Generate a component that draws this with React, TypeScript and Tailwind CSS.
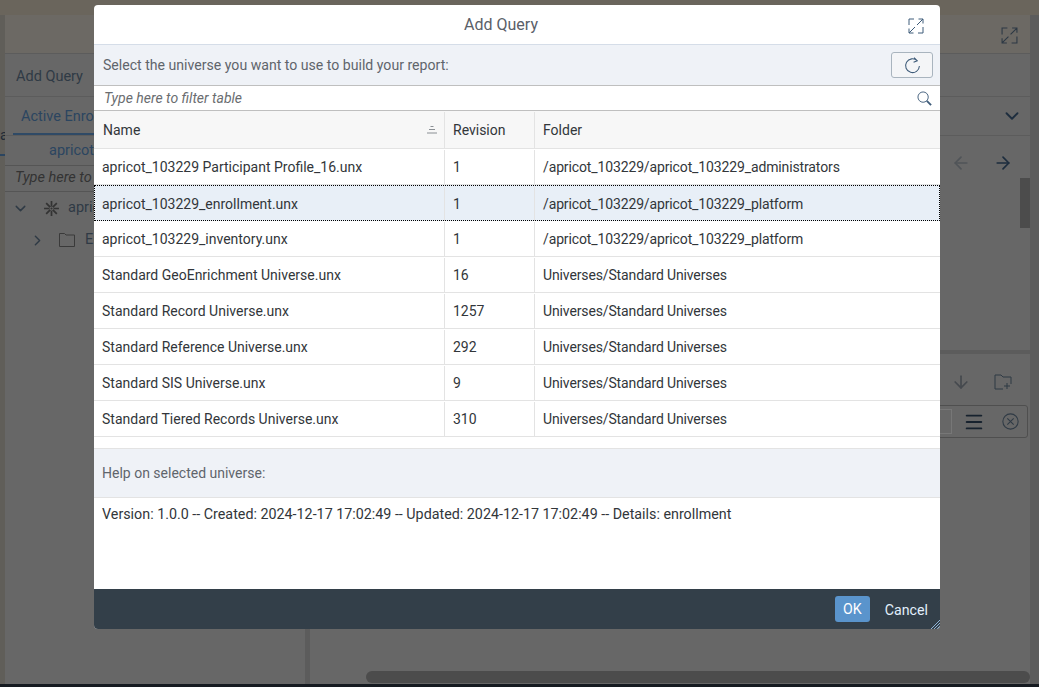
import { ArrowLeft, ArrowRight, ArrowDown, ChevronDown, ChevronRight, Menu } from "lucide-react";

const rows = [
  ["apricot_103229 Participant Profile_16.unx", "1", "/apricot_103229/apricot_103229_administrators"],
  ["apricot_103229_enrollment.unx", "1", "/apricot_103229/apricot_103229_platform"],
  ["apricot_103229_inventory.unx", "1", "/apricot_103229/apricot_103229_platform"],
  ["Standard GeoEnrichment Universe.unx", "16", "Universes/Standard Universes"],
  ["Standard Record Universe.unx", "1257", "Universes/Standard Universes"],
  ["Standard Reference Universe.unx", "292", "Universes/Standard Universes"],
  ["Standard SIS Universe.unx", "9", "Universes/Standard Universes"],
  ["Standard Tiered Records Universe.unx", "310", "Universes/Standard Universes"],
];

function ExpandIcon({ className }: { className: string }) {
  return (
    <svg viewBox="0 0 16 16" fill="none" stroke="currentColor" strokeWidth="1" className={className}>
      <path d="M1 7V1h5M15 9v6h-5M9 7l6-6M10.5 1H15v4.5M7 9l-6 6M1 10.5V15h4.5" />
    </svg>
  );
}

function StarIcon() {
  return (
    <svg viewBox="0 0 16 16" stroke="#333333" fill="#333333" className="ml-[14px] h-[17px] w-[17px]">
      <path strokeWidth="1.6" d="M8 1v14M1 8h14M3 3l10 10M13 3L3 13" />
      <circle cx="8" cy="8" r="1.5" stroke="#676767" strokeWidth="1" />
    </svg>
  );
}

function Background() {
  return (
    <div className="flex h-[687px] flex-col bg-[#5d5d5d] text-[14.5px] text-[#2f3a45]">
      <div className="h-[15px] bg-[#6a655c]"></div>
      <div className="flex flex-1">
        <div className="w-[5px] overflow-hidden bg-[#605e59] pt-[111px] leading-5 text-[#1f2a36]">
          <div>a</div>
          <div className="mt-[8px] h-[2px] bg-[#2b4560]"></div>
        </div>
        <div className="flex w-[1025px] flex-col rounded-t bg-[#676767]">
          <div className="flex h-[39px] items-center justify-end border-b border-[#5c5c5c] bg-[#6c6964] pr-[12px] pt-[3px]">
            <ExpandIcon className="h-[17px] w-[17px] text-[#2c3844]" />
          </div>
          <div className="flex h-[43px] items-center border-b border-[#5c5c5c] pl-[11px] pt-[3px]">Add Query</div>
          <div className="flex h-[39px] items-stretch justify-between border-b border-[#5c5c5c] pl-[8px] pr-[7px] text-[#2b4560]">
            <span className="flex w-[200px] items-center border-b-2 border-[#2f4a66] pl-[8px] pt-[3px]">Active Enrollment</span>
            <ChevronDown size={22} className="self-center text-[#1d2d3e]" />
          </div>
          <div className="flex flex-1">
            <div className="flex w-[305px] flex-col border-r-[5px] border-[#5c5c5c]">
              <div className="pl-[44px] pt-[4px] text-[#2b4560]">apricot_103229</div>
              <div className="mt-[3px] flex h-[27px] items-center border-y border-[#555555] pl-[10px] italic text-[#333333]">Type here to filter</div>
              <div className="flex h-[33px] items-center pl-[7px]">
                <ChevronDown size={17} />
                <StarIcon />
                <span className="ml-[8px]">apricot</span>
              </div>
              <div className="flex h-[31px] items-center pl-[24px]">
                <ChevronRight size={17} />
                <svg viewBox="0 0 16 14" fill="none" stroke="#3a3a3a" strokeWidth="1" className="ml-[13px] h-[14px] w-[16px]">
                  <path d="M0.5 13.5V0.5h5l1.5 1.5h8.5v11.5z" />
                </svg>
                <span className="ml-[10px]">Enrollment</span>
              </div>
            </div>
            <div className="flex flex-1 flex-col">
              <div className="flex h-[218px] justify-end border-b-[4px] border-[#5c5c5c]">
                <div className="flex items-start gap-[22px] pr-[7px] pt-[17px]">
                  <ArrowLeft size={20} className="text-[#505458]" />
                  <ArrowRight size={20} className="text-[#1d2d3e]" />
                </div>
                <div className="mr-[-2px] mt-[42px] h-[50px] w-[12px] bg-[#4c4c4c]"></div>
              </div>
              <div className="flex items-center justify-end gap-[23px] pr-[18px] pt-[18px]">
                <ArrowDown size={20} className="text-[#45494e]" />
                <svg viewBox="0 0 18 16" fill="none" stroke="currentColor" strokeWidth="1" className="h-[16px] w-[18px]">
                  <path d="M9 15H1V1h6l2 2h8v7M13 9v6M10 12h6" />
                </svg>
              </div>
              <div className="ml-auto mr-[2px] mt-[13px] flex h-[33px] w-[200px] items-center justify-end rounded-[3px] border border-[#4f4f4f] pr-[8px]">
                <div className="mr-[11px] h-[25px] w-[40px] border border-[#777777]"></div>
                <Menu size={22} className="text-[#17222e]" />
                <svg viewBox="0 0 16 16" fill="none" stroke="currentColor" strokeWidth="1" className="ml-[17px] h-[17px] w-[17px]">
                  <circle cx="8" cy="8" r="7.2" />
                  <path d="M5 5l6 6M11 5l-6 6" />
                </svg>
              </div>
              <div className="flex-1"></div>
              <div className="mb-[1px] ml-auto h-[12px] w-[664px] rounded-md bg-[#4c4c4c]"></div>
            </div>
          </div>
        </div>
        <div className="w-[9px] bg-[#5c5c5c]"></div>
      </div>
      <div className="h-[3px] bg-[#151a20]"></div>
    </div>
  );
}

export default function App() {
  return (
    <div className="relative h-[687px] w-[1039px] overflow-hidden font-['Roboto',sans-serif]">
      <Background />
      <div className="absolute left-[94px] top-[5px] flex h-[624px] w-[846px] flex-col overflow-hidden rounded-[4px] bg-white text-[14px] text-[#32363a]">
        <div className="relative flex h-[40px] shrink-0 items-center justify-center border-b border-[#d5dde8] pr-[32px] pt-[1px] text-[16px] text-[#5a6068]">
          Add Query
          <ExpandIcon className="absolute right-[16px] top-[13px] h-[16px] w-[16px] text-[#3f5c7a]" />
        </div>
        <div className="flex h-[40px] shrink-0 items-center justify-between bg-[#eff2f7] pl-[9px] pr-[7px] text-[14.1px] text-[#5f656c]">
          <span className="pt-[2px]">Select the universe you want to use to build your report:</span>
          <button className="flex h-[26px] w-[42px] items-center justify-center rounded-[3px] border border-[#a9b4be] bg-[#f4f5f7]">
            <svg viewBox="0 0 16 16" fill="none" stroke="#3f5c7a" strokeWidth="1" className="h-[17px] w-[17px]">
              <path d="M12.5 3.5A6.5 6.5 0 1 0 14.5 8.5M9.5 0.5l3 3-3.5 1.5" />
            </svg>
          </button>
        </div>
        <div className="flex h-[26px] shrink-0 items-center justify-between border-y border-[#bfbfbf] pl-[10px] pr-[8px] italic text-[#6a6d70]">
          <span>Type here to filter table</span>
          <svg viewBox="0 0 16 16" fill="none" stroke="#3f5c7a" className="h-[15px] w-[15px]">
            <circle cx="6.5" cy="6.5" r="5.5" strokeWidth="1" />
            <path d="M10.5 10.5l4.5 4.5" strokeWidth="2" />
          </svg>
        </div>
        <div className="flex h-[38px] shrink-0 border-b border-[#e3e3e3] bg-[#f7f7f7] pt-[1px] text-[#32363a]">
          <div className="flex w-[351px] items-center justify-between border-r border-[#e3e3e3] pl-[9px] pr-[6px]">
            <span>Name</span>
            <svg viewBox="0 0 12 10" className="h-[10px] w-[12px] text-[#8a8f94]" fill="none" stroke="currentColor" strokeWidth="1">
              <path d="M4.5 1.5h3M3 4.5h6M1 8h10" />
            </svg>
          </div>
          <div className="flex w-[90px] items-center border-r border-[#e3e3e3] pl-[8px]">Revision</div>
          <div className="flex flex-1 items-center pl-[8px]">Folder</div>
        </div>
        {rows.map((row, index) => (
          <div
            key={row[0]}
            className={
              index === 1
                ? "flex h-[36px] shrink-0 bg-[#e8eff7] pt-[2px] outline-1 -outline-offset-1 outline-dotted outline-black"
                : "flex h-[36px] shrink-0 border-b border-[#e3e3e3] pt-[1px]"
            }
          >
            <div className="flex w-[351px] items-center border-r border-[#e3e3e3] pl-[8px]">{row[0]}</div>
            <div className="flex w-[90px] items-center border-r border-[#e3e3e3] pl-[8px]">{row[1]}</div>
            <div className="flex flex-1 items-center pl-[8px] tracking-[-0.13px]">{row[2]}</div>
          </div>
        ))}
        <div className="h-[11px] shrink-0"></div>
        <div className="flex h-[50px] shrink-0 items-center border-y border-[#e3e3e3] bg-[#eff2f7] pl-[8px] text-[#5f656c]">
          Help on selected universe:
        </div>
        <div className="flex-1 pl-[8px] pt-[6px] text-[14.3px]">
          Version: 1.0.0 -- Created: 2024-12-17 17:02:49 -- Updated: 2024-12-17 17:02:49 -- Details: enrollment
        </div>
        <div className="relative flex h-[40px] shrink-0 items-center justify-end gap-[15px] bg-[#333f49] pr-[12px] text-[14.2px]">
          <button className="h-[26px] w-[35px] rounded-[3px] bg-[#5a94cc] pt-[1px] text-white">OK</button>
          <button className="pt-[3px] text-[#e2effc]">Cancel</button>
          <svg viewBox="0 0 9 9" className="absolute bottom-0 right-0 h-[9px] w-[9px]" stroke="#8fb3d6" strokeWidth="1">
            <path d="M0 9L9 0M3 9L9 3M6 9L9 6" />
          </svg>
        </div>
      </div>
    </div>
  );
}
